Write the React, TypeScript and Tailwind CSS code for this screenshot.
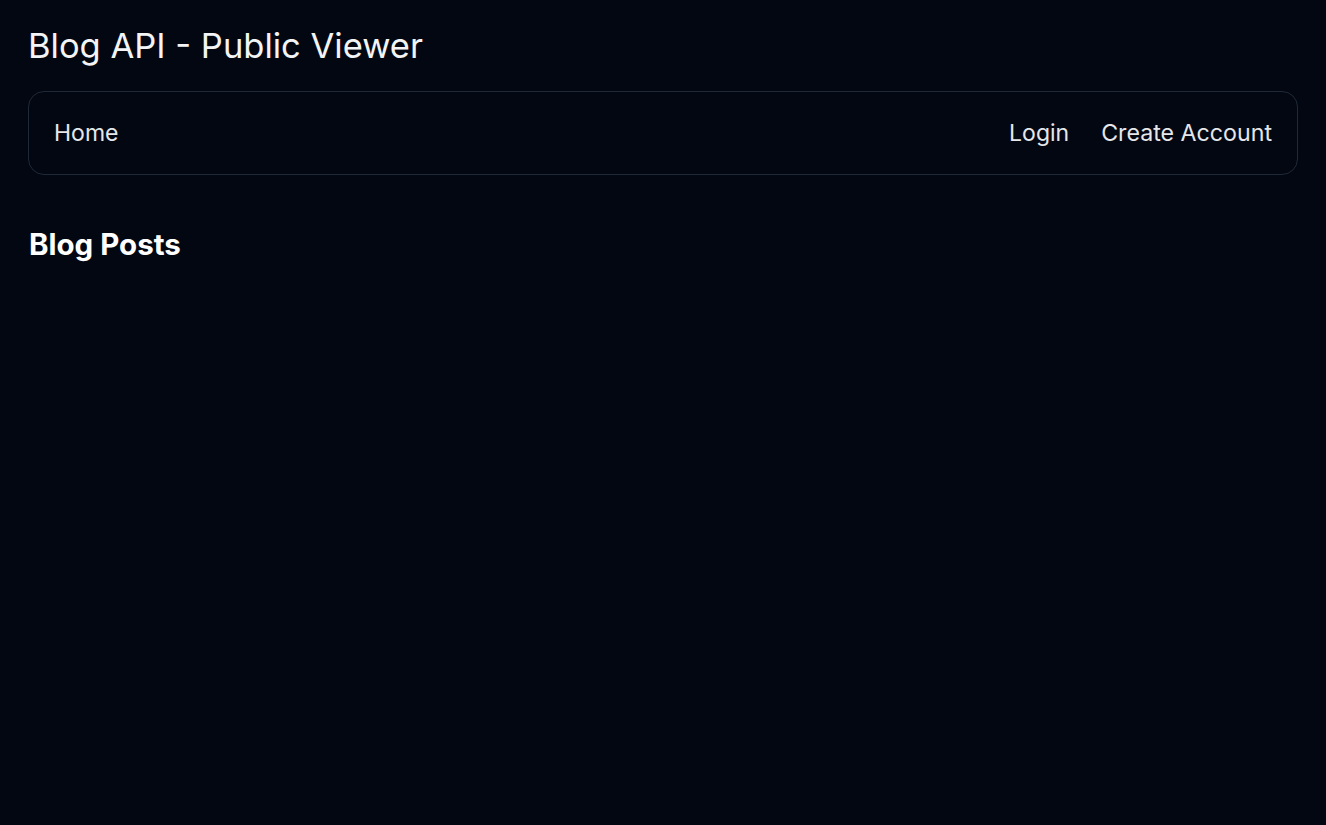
import React from "react";

export default function App() {
  return (
    <div
      className="min-h-[825px] w-full bg-[#030712] text-white px-7 pt-[26px]"
      style={{ fontFamily: "Inter, 'Noto Sans', sans-serif" }}
    >
      <h1 className="text-[34.5px] leading-[40px] font-normal text-[#f3f4f6]">Blog API - Public Viewer</h1>
      <nav className="mt-[25px] flex items-start justify-between rounded-2xl border border-[#1f2937] pl-[25px] pr-[25px] pt-[27px] pb-[27px]">
        <a className="text-[23px] leading-[28px] text-[#e5e7eb]">Home</a>
        <div className="flex items-center gap-[32px]">
          <a className="text-[23px] leading-[28px] text-[#e5e7eb]">Login</a>
          <a className="text-[23.2px] leading-[28px] text-[#e5e7eb]">Create Account</a>
        </div>
      </nav>
      <h2 className="mt-[51px] pl-px text-[29.5px] leading-[36px] font-bold text-white">Blog Posts</h2>
    </div>
  );
}
